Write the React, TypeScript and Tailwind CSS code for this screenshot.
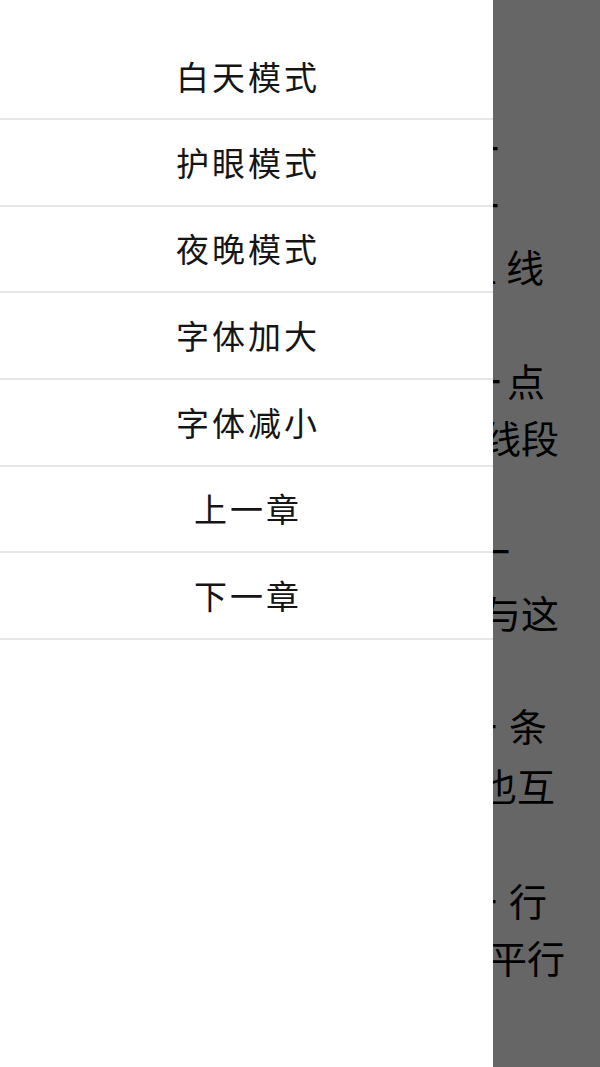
import React from 'react'

const menu = ['白天模式', '护眼模式', '夜晚模式', '字体加大', '字体减小', '上一章', '下一章']

// tails of the reading page lines that peek out to the right of the drawer
const lines = [
  { pre: '', tail: '一', cls: 'mt-0 pr-[101px]', gap: '' },
  { pre: '', tail: '一', cls: 'mt-[5px] pr-[101px]', gap: '' },
  { pre: '上', tail: '线', cls: 'mt-[10px] pr-[56px]', gap: 'mr-[9px]' },
  { pre: '一', tail: '点', cls: 'mt-[62px] pr-[55px]', gap: 'mr-[6px]' },
  { pre: '', tail: '线段', cls: 'mt-[5px] pr-[41px]', gap: '' },
  { pre: '', tail: '一', cls: 'mt-[61px] pr-[90px]', gap: '' },
  { pre: '', tail: '与这', cls: 'mt-[10px] pr-[41px]', gap: '' },
  { pre: '一', tail: '条', cls: 'mt-[61px] pr-[53px]', gap: 'mr-[12px]' },
  { pre: '', tail: '也互', cls: 'mt-[8px] pr-[45px]', gap: '' },
  { pre: '一', tail: '行', cls: 'mt-[63px] pr-[53px]', gap: 'mr-[12px]' },
  { pre: '', tail: '平行', cls: 'mt-[5px] pr-[35px]', gap: '' },
]

export default function App() {
  return (
    <div
      className="relative h-[1067px] w-full overflow-hidden bg-white text-black"
      style={{ fontFamily: '"Noto Sans CJK SC", "Noto Sans", sans-serif' }}
    >
      {/* reading page behind the drawer */}
      <div className="flex flex-col pt-[121px]">
        {lines.map((l, i) => (
          <div
            key={i}
            className={`flex h-[52px] justify-end whitespace-nowrap text-[38px] leading-[52px] ${l.cls}`}
          >
            {l.pre && <span className={l.gap}>{l.pre}</span>}
            <span>{l.tail}</span>
          </div>
        ))}
      </div>

      {/* dim overlay */}
      <div className="absolute inset-0 bg-black/60" />

      {/* drawer */}
      <nav className="absolute left-0 top-0 bottom-0 w-[493px] bg-white">
        {menu.map((m, i) => (
          <div
            key={m}
            className={`flex items-center justify-center border-b-2 border-[#e6e6e6] pl-[3px] text-[33px] tracking-[3px] text-[#151515] ${
              i === 0 ? 'h-[120px] pt-[36px]' : 'h-[86.67px]'
            }`}
          >
            {m}
          </div>
        ))}
      </nav>
    </div>
  )
}
